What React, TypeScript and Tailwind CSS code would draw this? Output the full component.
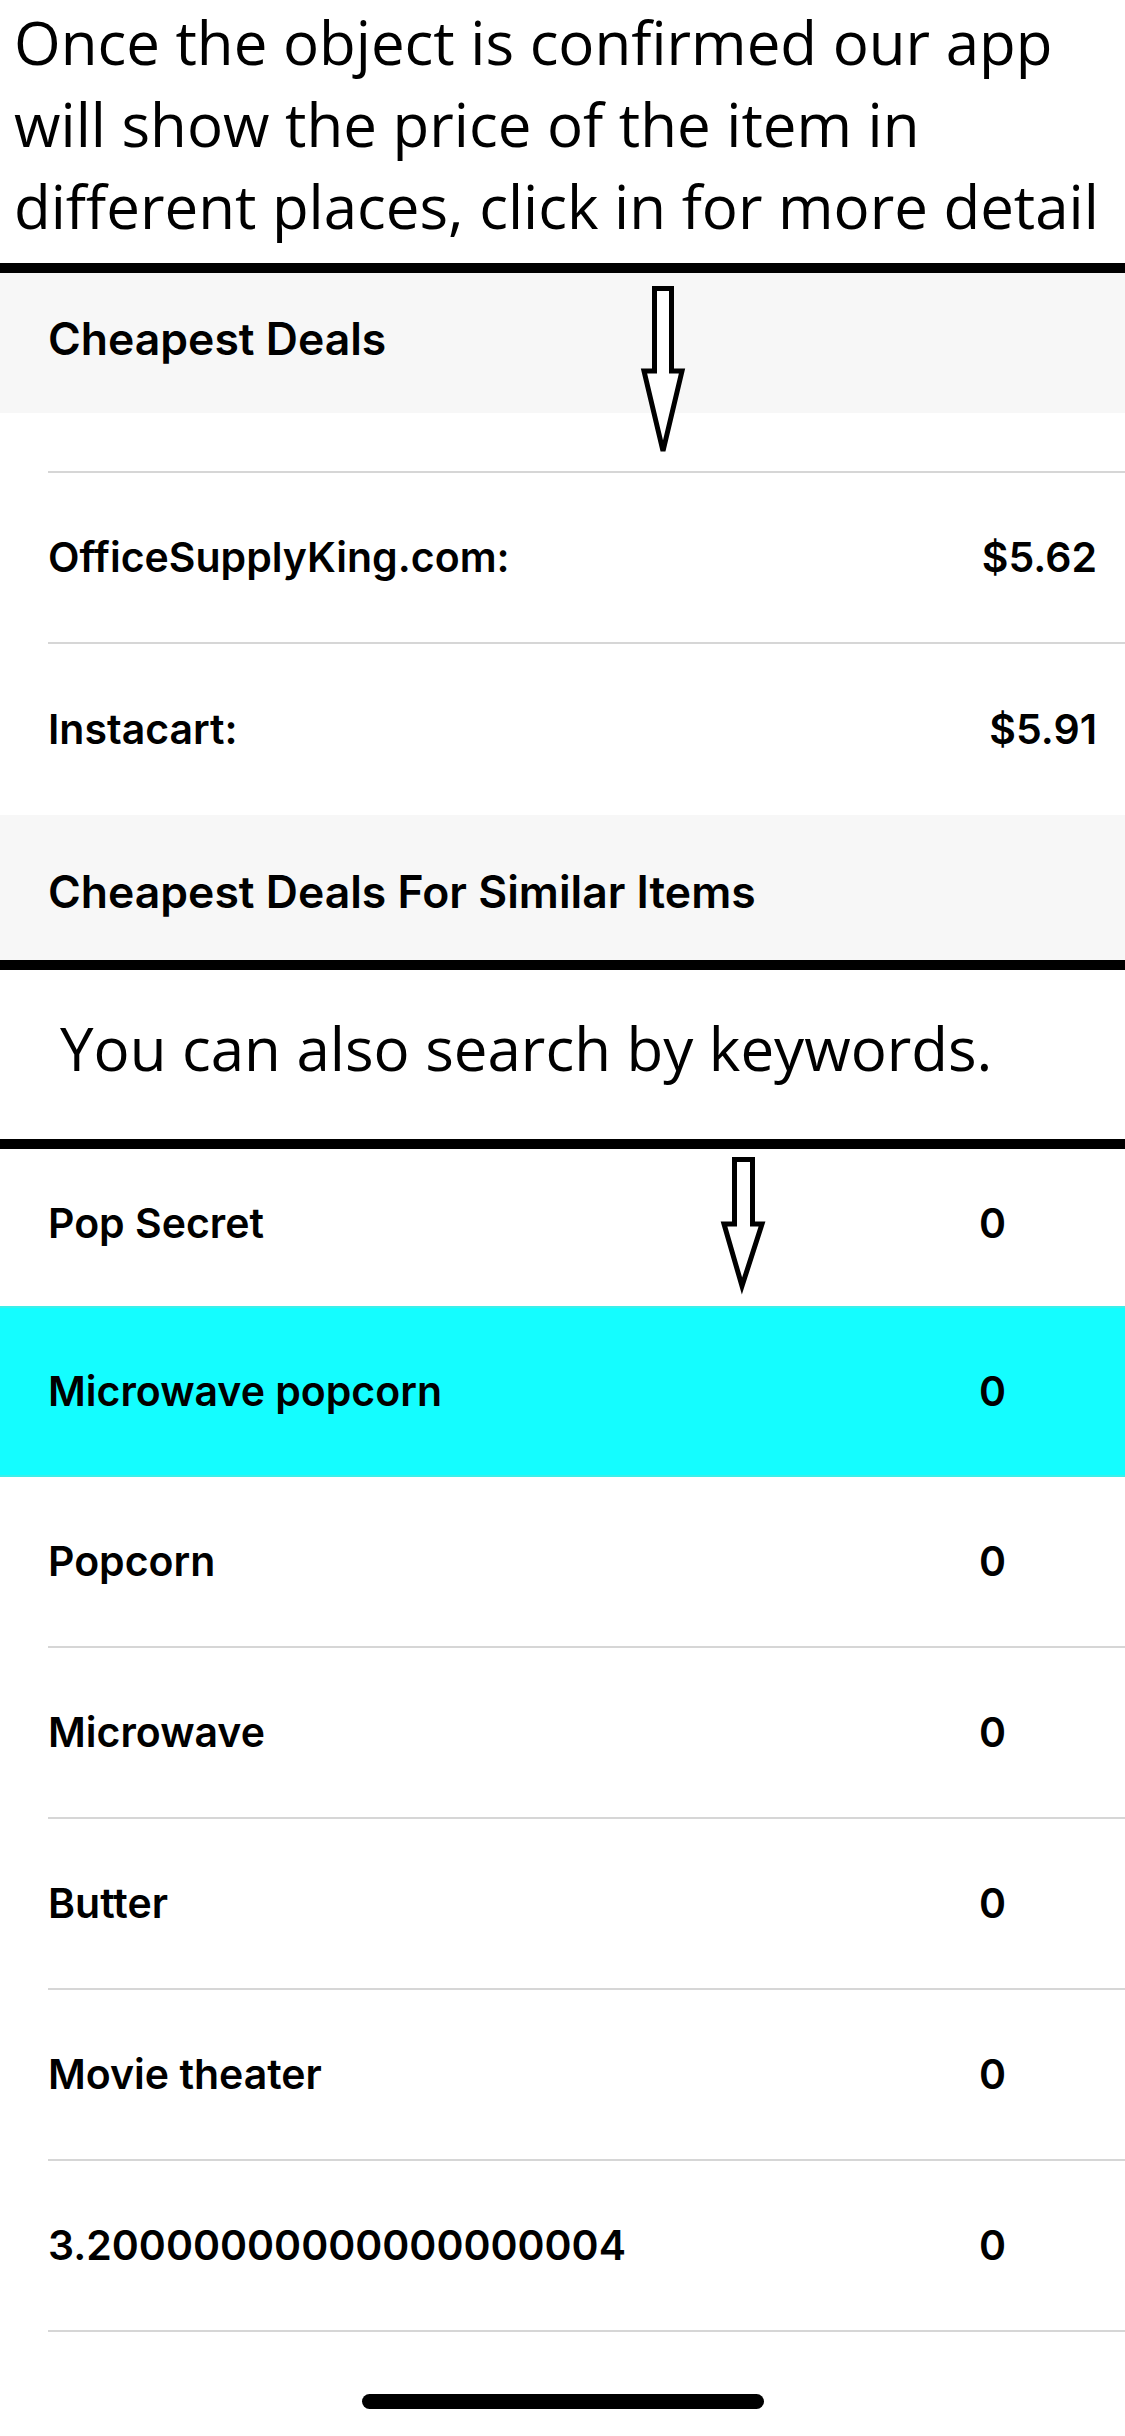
import React from "react";

const rowFont = { fontFamily: "Inter, 'Liberation Sans', sans-serif" };
const capFont = { fontFamily: "'Open Sans', 'Noto Sans', sans-serif" };

function PriceRow({ label, value, border }: { label: string; value: string; border?: boolean }) {
  return (
    <div className="pl-[48px]">
      <div
        className={
          "h-[171px] flex items-center justify-between pr-[28px] text-[41px] font-semibold text-black " +
          (border ? "border-b-2 border-[#d6d6d6]" : "")
        }
      >
        <span>{label}</span>
        <span>{value}</span>
      </div>
    </div>
  );
}

function KeywordRow({ label, border = true }: { label: string; border?: boolean }) {
  return (
    <div className="pl-[48px]">
      <div
        className={
          "h-[171px] flex items-center justify-between pr-[119px] text-[41px] font-semibold text-black " +
          (border ? "border-b-2 border-[#d6d6d6]" : "")
        }
      >
        <span>{label}</span>
        <span>0</span>
      </div>
    </div>
  );
}

function Arrow1() {
  return (
    <svg
      className="absolute left-[638px] top-[282px]"
      width="52"
      height="178"
      viewBox="638 282 52 178"
    >
      <polygon
        points="654.5,288.5 671.5,288.5 671.5,371 682,371 663,451 644,371 654.5,371"
        fill="white"
        stroke="black"
        strokeWidth="5"
        strokeLinejoin="miter"
      />
    </svg>
  );
}

function Arrow2() {
  return (
    <svg
      className="absolute left-[718px] top-[1153px]"
      width="52"
      height="142"
      viewBox="718 1153 52 142"
    >
      <polygon
        points="734.5,1159.5 752.5,1159.5 752.5,1224 762,1224 742,1286 724,1224 734.5,1224"
        fill="white"
        stroke="black"
        strokeWidth="5"
        strokeLinejoin="miter"
      />
    </svg>
  );
}

export default function App() {
  return (
    <div className="relative w-[1125px] h-[2436px] bg-white overflow-hidden" style={rowFont}>
      {/* Caption 1 */}
      <div
        className="h-[263px] pl-[14px] pt-[1px] text-[60px] leading-[82px] text-black"
        style={capFont}
      >
        <div className="whitespace-nowrap">Once the object is confirmed our app</div>
        <div className="whitespace-nowrap">will show the price of the item in</div>
        <div className="whitespace-nowrap">different places, click in for more detail</div>
      </div>
      <div className="h-[10px] bg-black" />

      {/* Cheapest Deals header */}
      <div className="h-[140px] bg-[#f7f7f7] flex items-center pl-[48px] pb-[7px] text-[44.5px] font-semibold text-black">
        Cheapest Deals
      </div>
      <div className="pl-[48px]">
        <div className="h-[60px] border-b-2 border-[#d6d6d6]" />
      </div>
      <PriceRow label="OfficeSupplyKing.com:" value="$5.62" border />
      <PriceRow label="Instacart:" value="$5.91" />

      {/* Similar items header */}
      <div className="h-[145px] bg-[#f7f7f7] flex items-center pl-[48px] pt-[9px] text-[44.5px] font-semibold text-black">
        Cheapest Deals For Similar Items
      </div>
      <div className="h-[10px] bg-black" />

      {/* Caption 2 */}
      <div
        className="h-[169px] pl-[60px] pt-[33px] text-[60px] leading-normal text-black whitespace-nowrap"
        style={capFont}
      >
        You can also search by keywords.
      </div>
      <div className="h-[10px] bg-black" />

      {/* Keyword rows */}
      <div className="pl-[48px]">
        <div className="h-[157px] flex items-center justify-between pr-[119px] pb-[8px] text-[41px] font-semibold text-black">
          <span>Pop Secret</span>
          <span>0</span>
        </div>
      </div>
      <div className="h-[171px] bg-[#14fdff] border-y-2 border-[#3cefea] pl-[48px] flex items-center justify-between pr-[119px] text-[41px] font-semibold text-black">
        <span>Microwave popcorn</span>
        <span>0</span>
      </div>
      <KeywordRow label="Popcorn" />
      <KeywordRow label="Microwave" />
      <KeywordRow label="Butter" />
      <KeywordRow label="Movie theater" />
      <KeywordRow label="3.20000000000000000004" />

      {/* Home indicator */}
      <div className="flex justify-center pt-[62px]">
        <div className="w-[402px] h-[15px] rounded-full bg-black" />
      </div>

      <Arrow1 />
      <Arrow2 />
    </div>
  );
}
